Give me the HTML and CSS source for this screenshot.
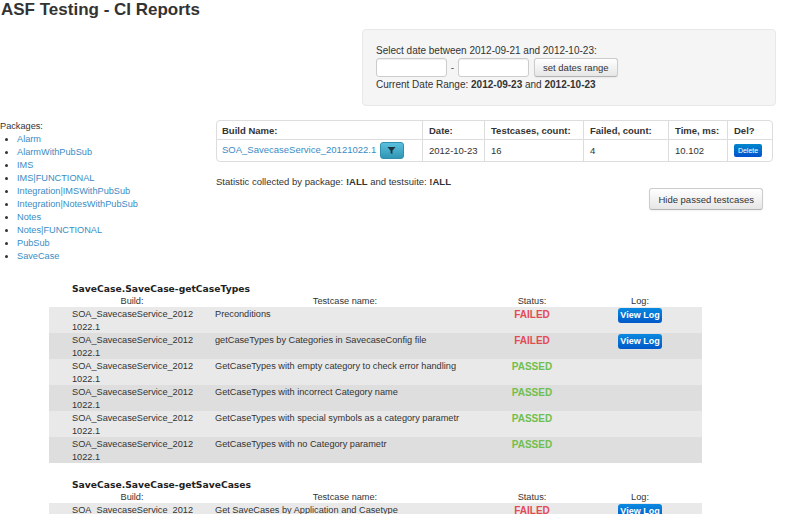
FILE: index.html
```html
<!DOCTYPE html>
<html>
<head>
<meta charset="utf-8">
<link rel="stylesheet" href="styles.css">
</head>
<body>
<h1 class="title">ASF Testing - CI Reports</h1>

<div class="datebox">
  <div class="line">Select date between 2012-09-21 and 2012-10-23:</div>
  <div class="controls">
    <input class="dinput" type="text"><span class="dash">-</span><input class="dinput" type="text">
    <button class="btn">set dates range</button>
  </div>
  <div class="line">Current Date Range: <b>2012-09-23</b> and <b>2012-10-23</b></div>
</div>

<div class="main">
  <div class="packages">
    <div>Packages:</div>
    <ul>
      <li><a>Alarm</a></li>
      <li><a>AlarmWithPubSub</a></li>
      <li><a>IMS</a></li>
      <li><a>IMS|FUNCTIONAL</a></li>
      <li><a>Integration|IMSWithPubSub</a></li>
      <li><a>Integration|NotesWithPubSub</a></li>
      <li><a>Notes</a></li>
      <li><a>Notes|FUNCTIONAL</a></li>
      <li><a>PubSub</a></li>
      <li><a>SaveCase</a></li>
    </ul>
  </div>
  <div class="content">
    <table class="builds">
      <colgroup><col class="c1"><col class="c2"><col class="c3"><col class="c4"><col class="c5"><col></colgroup>
      <tr class="hd"><th>Build Name:</th><th>Date:</th><th>Testcases, count:</th><th>Failed, count:</th><th>Time, ms:</th><th>Del?</th></tr>
      <tr class="dt"><td><a>SOA_SavecaseService_20121022.1</a> <span class="btn-info"><svg width="9" height="9" viewBox="0 0 10 10"><path d="M0.5 1h9L6 5.2V9L4 8V5.2z" fill="#1d3440"/></svg></span></td><td>2012-10-23</td><td>16</td><td>4</td><td>10.102</td><td><span class="btn-del">Delete</span></td></tr>
    </table>
    <div class="stat">Statistic collected by package: <b>!ALL</b> and testsuite: <b>!ALL</b></div>
    <div class="hiderow"><button class="btn hide">Hide passed testcases</button></div>
  </div>
</div>

<div class="suite s1">
  <div class="sname">SaveCase.SaveCase-getCaseTypes</div>
  <table class="cases">
    <colgroup><col class="k1"><col class="k2"><col class="k3"><col class="k4"><col></colgroup>
    <tr class="ch"><th>Build:</th><th>Testcase name:</th><th>Status:</th><th>Log:</th><th></th></tr>
    <tr class="r a"><td>SOA_SavecaseService_2012<br>1022.1</td><td>Preconditions</td><td class="st fail">FAILED</td><td class="lg"><span class="btn-log">View Log</span></td><td></td></tr>
    <tr class="r b"><td>SOA_SavecaseService_2012<br>1022.1</td><td>getCaseTypes by Categories in SavecaseConfig file</td><td class="st fail">FAILED</td><td class="lg"><span class="btn-log">View Log</span></td><td></td></tr>
    <tr class="r a"><td>SOA_SavecaseService_2012<br>1022.1</td><td>GetCaseTypes with empty category to check error handling</td><td class="st pass">PASSED</td><td class="lg"></td><td></td></tr>
    <tr class="r b"><td>SOA_SavecaseService_2012<br>1022.1</td><td>GetCaseTypes with incorrect Category name</td><td class="st pass">PASSED</td><td class="lg"></td><td></td></tr>
    <tr class="r a"><td>SOA_SavecaseService_2012<br>1022.1</td><td>GetCaseTypes with special symbols as a category parametr</td><td class="st pass">PASSED</td><td class="lg"></td><td></td></tr>
    <tr class="r b"><td>SOA_SavecaseService_2012<br>1022.1</td><td>GetCaseTypes with no Category parametr</td><td class="st pass">PASSED</td><td class="lg"></td><td></td></tr>
  </table>
</div>

<div class="suite s2">
  <div class="sname">SaveCase.SaveCase-getSaveCases</div>
  <table class="cases">
    <colgroup><col class="k1"><col class="k2"><col class="k3"><col class="k4"><col></colgroup>
    <tr class="ch"><th>Build:</th><th>Testcase name:</th><th>Status:</th><th>Log:</th><th></th></tr>
    <tr class="r a"><td>SOA_SavecaseService_2012<br>1022.1</td><td>Get SaveCases by Application and Casetype</td><td class="st fail">FAILED</td><td class="lg"><span class="btn-log">View Log</span></td><td></td></tr>
  </table>
</div>
</body>
</html>
```

FILE: styles.css
```css
html, body { margin: 0; padding: 0; background: #fff; }
body {
  font-family: "Liberation Sans", Arial, sans-serif;
  font-size: 9.5px;
  color: #333;
  overflow: hidden;
  height: 514px;
}
a { color: #3a8cc4; text-decoration: none; }
b { color: #333; }

.title {
  margin: 0;
  padding: 0 0 0 1px;
  font-size: 17px;
  line-height: 20px;
  font-weight: bold;
  color: #333;
}

.datebox {
  margin: 9px 0 0 362px;
  width: 386px;
  height: 61px;
  padding: 14px 13px 0 13px;
  background: #f5f5f5;
  border: 1px solid #e8e8e8;
  border-radius: 4px;
  font-size: 10px;
}
.datebox .line { line-height: 13px; }
.controls { display: flex; align-items: center; height: 21px; }
.dinput {
  width: 69px;
  height: 17px;
  padding: 0;
  margin: 0;
  border: 1px solid #ccc;
  border-radius: 3px;
  background: #fff;
  box-shadow: inset 0 1px 1px rgba(0,0,0,0.07);
}
.dash { width: 11px; text-align: center; color: #555; }
.btn {
  margin-left: 5px;
  height: 19px;
  padding: 0 8px;
  font-family: "Liberation Sans", Arial, sans-serif;
  font-size: 9.5px;
  color: #333;
  border: 1px solid #ccc;
  border-bottom-color: #b3b3b3;
  border-radius: 3px;
  background: linear-gradient(#ffffff, #e6e6e6);
  box-shadow: inset 0 1px 0 rgba(255,255,255,0.2), 0 1px 2px rgba(0,0,0,0.05);
}

.main { display: flex; margin-top: 14px; }
.packages { width: 216px; line-height: 13px; font-size: 9.2px; }
.packages ul { margin: 0; padding: 0 0 0 17px; }
.packages li { list-style: disc; }
.content { width: 557px; }

.builds {
  width: 557px;
  border-collapse: separate;
  border-spacing: 0;
  border: 1px solid #ddd;
  border-radius: 4px;
  table-layout: fixed;
}
.builds .c1 { width: 205px; }
.builds .c2 { width: 62px; }
.builds .c3 { width: 99px; }
.builds .c4 { width: 85px; }
.builds .c5 { width: 59px; }
.builds th, .builds td {
  text-align: left;
  padding: 0 6px;
  border-left: 1px solid #ddd;
  white-space: nowrap;
}
.builds th:first-child, .builds td:first-child { border-left: none; padding-left: 5px; }
.builds th { height: 18px; font-weight: bold; color: #333; }
.builds td { height: 21px; border-top: 1px solid #ddd; }
.btn-info {
  display: inline-flex;
  align-items: center;
  justify-content: center;
  width: 22px;
  height: 15px;
  vertical-align: middle;
  margin-left: 1px;
  border-radius: 3px;
  border: 1px solid #2f8fad;
  background: linear-gradient(#5bc0de, #2f96b4);
}
.btn-del {
  display: inline-block;
  width: 28px;
  height: 13px;
  line-height: 13px;
  text-align: center;
  font-size: 7px;
  color: #fff;
  border-radius: 2px;
  background: linear-gradient(#0088cc, #0050cc);
  vertical-align: middle;
}

.stat { margin-top: 14px; line-height: 12px; }
.hiderow { display: flex; justify-content: flex-end; padding-right: 10px; margin-top: 0; }
.hide { height: 22px; padding: 0 8px; }

.suite { margin-left: 49px; width: 653px; }
.s1 { margin-top: 20px; }
.s2 { margin-top: 16px; }
.sname {
  font-family: "DejaVu Sans", Verdana, sans-serif;
  font-weight: bold;
  font-size: 9.2px;
  line-height: 12px;
  padding-left: 23px;
  color: #222;
}
.cases { width: 653px; border-collapse: collapse; table-layout: fixed; font-size: 9.2px; }
.cases .k1 { width: 166px; }
.cases .k2 { width: 260px; }
.cases .k3 { width: 114px; }
.cases .k4 { width: 102px; }
.cases th {
  font-weight: normal;
  text-align: center;
  height: 12px;
  line-height: 12px;
  padding: 0;
  color: #333;
}
.cases td { padding: 1px 0 0 0; vertical-align: top; line-height: 12.5px; height: 26px; box-sizing: border-box; white-space: nowrap; }
.cases td:first-child { padding-left: 23px; }
.cases tr.a { background: #e9e9e9; }
.cases tr.b { background: #dedede; }
.cases td.st { text-align: center; font-weight: bold; font-size: 10px; padding-top: 2px; }
.fail { color: #e34b56; }
.pass { color: #6fbf4f; }
.cases td.lg { text-align: center; }
.btn-log {
  display: inline-block;
  width: 44px;
  height: 15px;
  line-height: 15px;
  margin-top: 0;
  text-align: center;
  font-size: 9px;
  font-weight: bold;
  color: #fff;
  border-radius: 3px;
  background: linear-gradient(#0a8ae0, #0058c8);
  vertical-align: top;
}
```
